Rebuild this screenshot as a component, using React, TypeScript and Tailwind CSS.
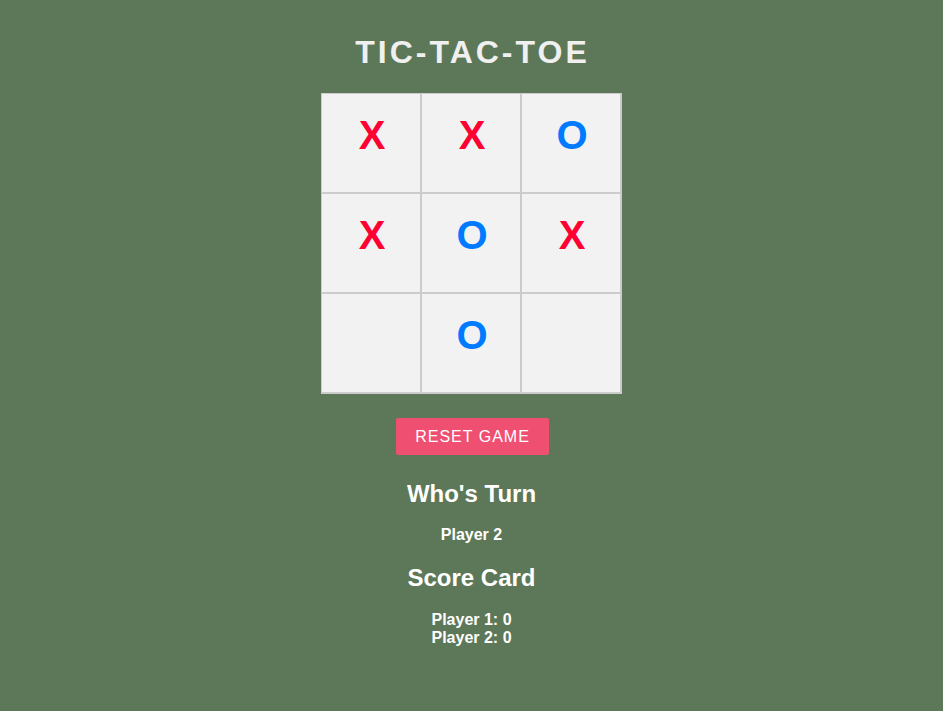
import React from "react";

type Mark = "X" | "O" | "";

const board: Mark[] = ["X", "X", "O", "X", "O", "X", "", "O", ""];

export default function App() {
  return (
    <div className="min-h-[711px] bg-[#5d7858] flex flex-col items-center font-['Liberation_Sans',Arial,sans-serif] text-white">
      <h1 className="mt-[34px] text-[32px] leading-[37px] font-bold tracking-[3px] text-[#f0f0f0] pl-[2px]">
        TIC-TAC-TOE
      </h1>

      <div className="mt-[22px] grid grid-cols-3 w-[301px] border-r border-b border-[#cccccc]">
        {board.map((mark, i) => (
          <div
            key={i}
            className="h-[100px] w-[100px] border border-[#cccccc] bg-[#f2f2f2] pt-[18px] pl-[2px] text-center"
          >
            <span
              className={
                "text-[40px] leading-[46px] font-bold " +
                (mark === "X" ? "text-[#ff0033]" : "text-[#007bff]")
              }
            >
              {mark}
            </span>
          </div>
        ))}
      </div>

      <button className="mt-[24px] ml-[2px] h-[37px] px-[19px] bg-[#ef5071] rounded-[2px] text-[16px] tracking-[1px] text-white">
        RESET GAME
      </button>

      <h2 className="mt-[25px] text-[24px] leading-[28px] font-bold">Who's Turn</h2>
      <p className="mt-[18px] text-[16px] leading-[18px] font-bold">Player 2</p>

      <h2 className="mt-[20px] text-[24px] leading-[28px] font-bold">Score Card</h2>
      <div className="mt-[19px] text-[16px] leading-[18px] font-bold text-center">
        <p>Player 1: 0</p>
        <p>Player 2: 0</p>
      </div>
    </div>
  );
}
